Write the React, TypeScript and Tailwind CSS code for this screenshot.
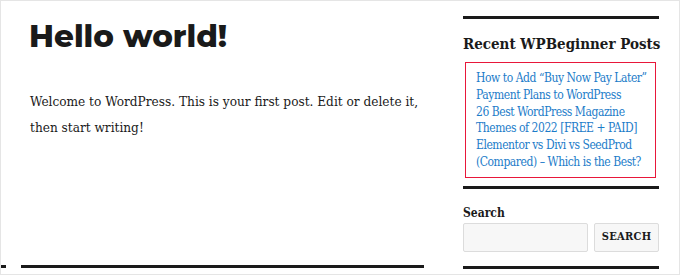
export default function App() {
  const serif = { fontFamily: '"DejaVu Serif Condensed", "DejaVu Serif", serif', fontStretch: 'condensed' as const };
  return (
    <div className="w-[680px] h-[275px] bg-white border border-[#e5e5e5] box-border overflow-hidden flex text-[#1a1a1a]">
      <div className="w-[439px] flex flex-col">
        <h1
          className="ml-[28px] mt-[15px] text-[31px] leading-[40px] font-extrabold"
          style={{ fontFamily: 'Montserrat, Inter, sans-serif' }}
        >
          Hello world!
        </h1>
        <p className="ml-[29px] mt-[32px] text-[13.5px] leading-[26px] w-[400px]" style={serif}>
          Welcome to WordPress. This is your first post. Edit or delete it, then start writing!
        </p>
        <div className="mt-auto mb-[6px] flex items-center">
          <div className="w-[5px] h-[3px] bg-[#1a1a1a]" />
          <div className="ml-[15px] w-[403px] h-[3px] bg-[#1a1a1a]" />
        </div>
      </div>
      <div className="ml-[23px] w-[196px] flex flex-col">
        <div className="mt-[15px] h-[3px] bg-[#1a1a1a]" />
        <h2 className="mt-[15px] text-[15px] leading-[20px] font-bold whitespace-nowrap" style={serif}>
          Recent WPBeginner Posts
        </h2>
        <div className="mt-[8px] ml-[2px] w-[191px] h-[116px] border border-[#e8173a] pl-[10px] pt-[7px]">
          <ul className="text-[12px] leading-[16.8px] tracking-[-0.45px] text-[#1c7cc9] whitespace-nowrap" style={serif}>
            <li>How to Add “Buy Now Pay Later”<br />Payment Plans to WordPress</li>
            <li>26 Best WordPress Magazine<br />Themes of 2022 [FREE + PAID]</li>
            <li>Elementor vs Divi vs SeedProd<br />(Compared) – Which is the Best?</li>
          </ul>
        </div>
        <div className="mt-[8px] h-[3px] bg-[#1a1a1a]" />
        <label className="mt-[17px] text-[12px] leading-[14px] font-bold" style={serif}>
          Search
        </label>
        <div className="mt-[3px] flex gap-[6px]">
          <div className="w-[125px] h-[29px] bg-[#f7f7f7] border border-[#dcdcdc] rounded-[2px]" />
          <button
            className="w-[65px] h-[29px] bg-[#f7f7f7] border border-[#dcdcdc] rounded-[2px] text-[11px] font-bold tracking-[0.3px] text-[#1a1a1a]"
            style={serif}
          >
            SEARCH
          </button>
        </div>
        <div className="mt-[14px] h-[3px] bg-[#1a1a1a]" />
      </div>
    </div>
  );
}
